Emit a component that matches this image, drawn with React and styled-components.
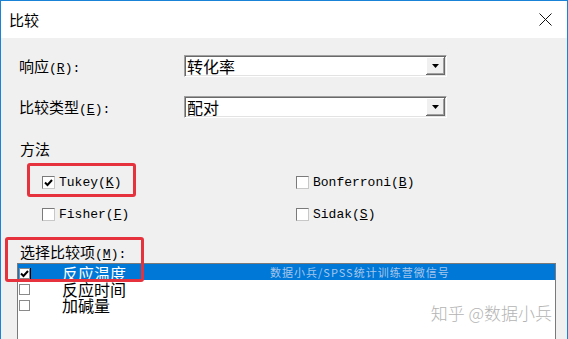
import { createGlobalStyle, styled } from 'styled-components'

const GlobalStyle = createGlobalStyle`
  html, body {
    margin: 0;
    padding: 0;
    background: #f0f0f0;
  }
  body {
    width: 568px;
    height: 339px;
    overflow: hidden;
  }
`

const Window = styled.div`
  position: relative;
  width: 568px;
  height: 339px;
  box-sizing: border-box;
  border: 1px solid #1883d7;
  border-bottom: none;
  display: flex;
  flex-direction: column;
  overflow: hidden;
  font-family: "Noto Sans CJK SC", sans-serif;
  color: #000;
`

const TitleBar = styled.div`
  height: 37px;
  flex: none;
  background: #fff;
  display: flex;
  align-items: center;
  justify-content: space-between;
  padding: 0 15px 0 8px;
  font-size: 15px;
`

const Body = styled.div`
  flex: 1;
  background: #f0f0f0;
  padding: 17px 16px 0;
  display: flex;
  flex-direction: column;
  min-height: 0;
`

const Lat = styled.span`
  font-family: "Liberation Mono", monospace;
  font-size: 13px;
  line-height: 1;
`

const FieldGrid = styled.div`
  display: grid;
  grid-template-columns: 165px 263px;
  grid-auto-rows: 22px;
  row-gap: 19px;
  padding-left: 2px;
`

const Label = styled.div`
  font-size: 15px;
  height: 22px;
  line-height: 22px;
  white-space: nowrap;
`

const Select = styled.div`
  height: 22px;
  box-sizing: border-box;
  display: flex;
  background: #fff;
  border: 1px solid;
  border-color: #a0a0a0 #fff #fff #a0a0a0;
  box-shadow: inset 1px 1px #696969, inset -1px -1px #e3e3e3;
  padding: 1px;
`

const SelectValue = styled.div`
  flex: 1;
  font-size: 16px;
  height: 18px;
  line-height: 18px;
  padding-left: 1px;
  overflow: visible;
`

const ArrowButton = styled.div`
  width: 19px;
  background: #f0f0f0;
  display: flex;
  align-items: center;
  justify-content: center;
  box-shadow: inset -1px -1px #696969, inset 1px 1px #fff, inset -2px -2px #a0a0a0;
`

const SectionTitle = styled.div`
  font-size: 15px;
  height: 18px;
  line-height: 18px;
  margin-top: 22px;
  padding-left: 3px;
`

const MethodGrid = styled.div`
  display: grid;
  grid-template-columns: 254px 200px;
  grid-auto-rows: 17px;
  row-gap: 15px;
  margin-top: 16px;
  padding-left: 25px;
`

const CheckItem = styled.div`
  display: flex;
  align-items: center;
  gap: 4px;
  height: 17px;
`

const Box = styled.div`
  width: ${p => p.$size}px;
  height: ${p => p.$size}px;
  box-sizing: border-box;
  background: #fff;
  border: 1px solid;
  border-color: ${p => p.$flat ? '#8a8a8a' : '#7a7a7a #c8c8c8 #c8c8c8 #7a7a7a'};
  display: flex;
  align-items: center;
  justify-content: center;
  flex: none;
`

const ListLabel = styled.div`
  font-size: 15px;
  height: 18px;
  line-height: 18px;
  margin-top: 20px;
  padding-left: 3px;
  white-space: nowrap;
`

const List = styled.div`
  position: relative;
  margin-top: 2px;
  width: 539px;
  flex: 1;
  background: #fff;
  border: 1px solid #7a7a7a;
  border-bottom: none;
  box-sizing: border-box;
`

const Row = styled.div`
  height: 16px;
  display: flex;
  align-items: flex-start;
  padding-left: 1px;
  background: ${p => p.$selected ? '#0078d7' : 'transparent'};
  color: ${p => p.$selected ? '#fff' : '#000'};
`

const RowBox = styled(Box)`
  margin-top: 4px;
  box-shadow: ${p => p.$focus ? '1px 0 #000' : 'none'};
`

const RowText = styled.div`
  font-size: 16px;
  height: 16px;
  line-height: 16px;
  margin-top: 1px;
  margin-left: 32px;
  white-space: nowrap;
`

const Stamp = styled.div`
  margin-left: 144px;
  font-size: 11px;
  line-height: 16px;
  letter-spacing: 1px;
  color: #a6c6ea;
  white-space: nowrap;
`

const Watermark = styled.div`
  position: absolute;
  right: 3px;
  bottom: 14px;
  font-size: 17px;
  font-weight: 300;
  color: #b4b4b4;
`

const Annotation = styled.div`
  position: absolute;
  left: ${p => p.$x}px;
  top: ${p => p.$y}px;
  width: ${p => p.$w}px;
  height: ${p => p.$h}px;
  box-sizing: border-box;
  border: 3px solid #e5323d;
  border-radius: 3px;
  pointer-events: none;
`

const CloseIcon = () => (
  <svg width="13" height="13" viewBox="0 0 13 13">
    <path d="M0.5 0.5 L12.5 12.5 M12.5 0.5 L0.5 12.5" stroke="#111" strokeWidth="1" />
  </svg>
)

const Arrow = () => (
  <svg width="7" height="4" viewBox="0 0 7 4">
    <path d="M0 0 H7 L3.5 4 Z" fill="#000" />
  </svg>
)

const Tick = () => (
  <svg width="9" height="8" viewBox="0 0 9 8">
    <path d="M1 3.5 L3.5 6 L8 1" stroke="#000" strokeWidth="2" fill="none" />
  </svg>
)

const Check = ({ checked, size = 13, flat, focus }) => {
  const B = flat ? RowBox : Box
  return (
    <B $size={size} $flat={flat} $focus={focus}>
      {checked && <Tick />}
    </B>
  )
}

const methods = [
  { name: 'Tukey', key: 'K', checked: true },
  { name: 'Bonferroni', key: 'B' },
  { name: 'Fisher', key: 'F' },
  { name: 'Sidak', key: 'S' },
]

const items = [
  { name: '反应温度', checked: true, selected: true },
  { name: '反应时间' },
  { name: '加碱量' },
]

export default function App() {
  return (
    <>
      <GlobalStyle />
      <Window>
        <TitleBar>
          <span>比较</span>
          <CloseIcon />
        </TitleBar>
        <Body>
          <FieldGrid>
            <Label>响应<Lat>(<u>R</u>):</Lat></Label>
            <Select>
              <SelectValue>转化率</SelectValue>
              <ArrowButton><Arrow /></ArrowButton>
            </Select>
            <Label>比较类型<Lat>(<u>E</u>):</Lat></Label>
            <Select>
              <SelectValue>配对</SelectValue>
              <ArrowButton><Arrow /></ArrowButton>
            </Select>
          </FieldGrid>

          <SectionTitle>方法</SectionTitle>
          <MethodGrid>
            {methods.map(m => (
              <CheckItem key={m.name}>
                <Check checked={m.checked} />
                <Lat>{m.name}(<u>{m.key}</u>)</Lat>
              </CheckItem>
            ))}
          </MethodGrid>

          <ListLabel>选择比较项<Lat>(<u>M</u>):</Lat></ListLabel>
          <List>
            {items.map(it => (
              <Row key={it.name} $selected={it.selected}>
                <Check checked={it.checked} size={11} flat focus={it.selected} />
                <RowText>{it.name}</RowText>
                {it.selected && <Stamp>数据小兵/SPSS统计训练营微信号</Stamp>}
              </Row>
            ))}
            <Watermark>知乎 @数据小兵</Watermark>
          </List>
        </Body>
        <Annotation $x={26} $y={162} $w={109} $h={34} />
        <Annotation $x={4} $y={236} $w={139} $h={45} />
      </Window>
    </>
  )
}
